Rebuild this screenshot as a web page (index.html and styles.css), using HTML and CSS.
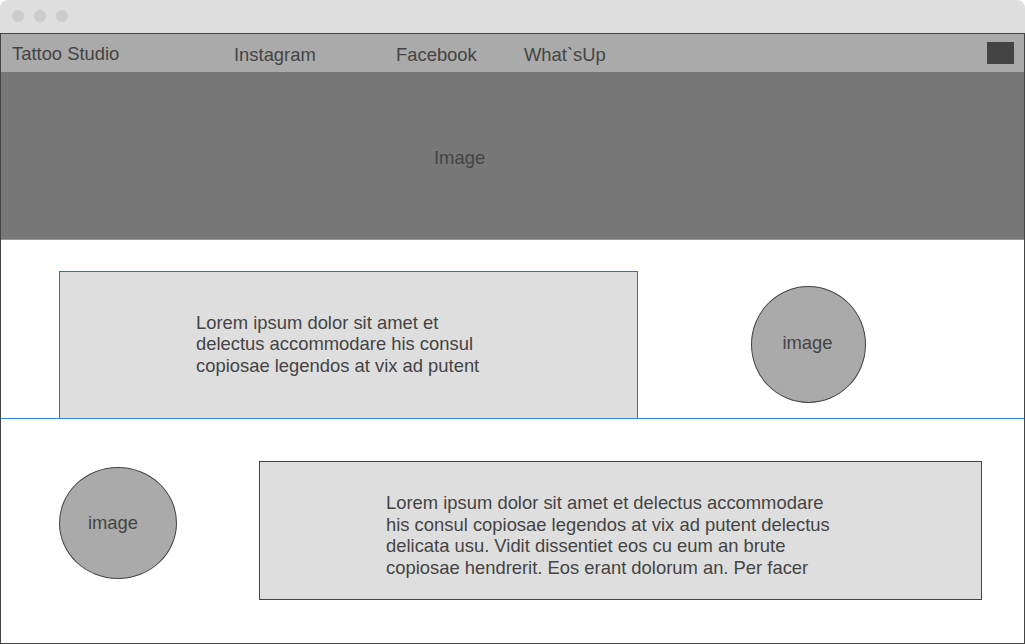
FILE: index.html
```html
<!DOCTYPE html>
<html>
<head>
<meta charset="utf-8">
<title>Tattoo Studio</title>
<link rel="stylesheet" href="styles.css">
</head>
<body>
<div class="window">
  <div class="chrome">
    <span class="dot"></span><span class="dot"></span><span class="dot"></span>
  </div>
  <div class="frame">
    <nav class="nav">
      <span class="brand">Tattoo Studio</span>
      <a class="link link-ig">Instagram</a>
      <a class="link link-fb">Facebook</a>
      <a class="link link-wa">What`sUp</a>
      <span class="menu-btn"></span>
    </nav>
    <div class="hero">Image</div>
    <section class="row row-one">
      <div class="card card-one">
        <p class="card-text">Lorem ipsum dolor sit amet et<br>delectus accommodare his consul<br>copiosae legendos at vix ad putent</p>
      </div>
      <div class="circle circle-one">image</div>
    </section>
    <section class="row row-two">
      <div class="circle circle-two">image</div>
      <div class="card card-two">
        <p class="card-text">Lorem ipsum dolor sit amet et delectus accommodare<br>his consul copiosae legendos at vix ad putent delectus<br>delicata usu. Vidit dissentiet eos cu eum an brute<br>copiosae hendrerit. Eos erant dolorum an. Per facer</p>
      </div>
    </section>
  </div>
</div>
</body>
</html>
```

FILE: styles.css
```css
* { box-sizing: border-box; }
html, body { margin: 0; padding: 0; background: #ffffff; }
body {
  font-family: "Liberation Sans", Arial, sans-serif;
  font-size: 18.4px;
  color: #444444;
}
.window { width: 1025px; height: 644px; }
.chrome {
  height: 33px;
  background: #dedede;
  border-radius: 8px 8px 0 0;
  display: flex;
  align-items: center;
  gap: 10px;
  padding-left: 12px;
  padding-bottom: 1px;
}
.dot {
  width: 12px; height: 12px;
  border-radius: 50%;
  background: #cccccc;
}
.frame {
  height: 611px;
  border: 1px solid #444444;
  display: flex;
  flex-direction: column;
}
.nav {
  height: 38px;
  background: #aaaaaa;
  display: flex;
  align-items: center;
  padding-left: 11px;
  padding-right: 9px;
  flex-shrink: 0;
}
.brand { width: 222px; line-height: 21px; margin-top: 1px; }
.link { line-height: 21px; color: #444444; margin-top: 2px; }
.link-ig { width: 162px; }
.link-fb { width: 128px; }
.menu-btn {
  margin-left: auto;
  margin-right: 1px;
  width: 27px; height: 22px;
  background: #444444;
}
.hero {
  height: 168px;
  background: #777777;
  border-bottom: 1px solid #999999;
  display: flex;
  align-items: center;
  padding-left: 433px;
  padding-top: 5px;
  flex-shrink: 0;
}
.row { display: flex; align-items: flex-start; flex-shrink: 0; }
.row-one { height: 178px; padding-left: 58px; padding-top: 31px; }
.row-two {
  flex: 1;
  border-top: 1px solid #3d80e6;
  padding-left: 58px;
}
.card { background: #dedede; }
.card-text { margin: 0; line-height: 21.6px; white-space: nowrap; }
.card-one {
  width: 579px; height: 147px;
  border: 1px solid #4169c4;
  border-bottom: none;
  display: flex;
  align-items: center;
  padding-left: 136px;
  padding-bottom: 2px;
}
.circle {
  background: #aaaaaa;
  border: 1px solid #444444;
  border-radius: 50%;
  display: flex;
  align-items: center;
  justify-content: center;
}
.circle-one { width: 115px; height: 117px; margin-left: 113px; margin-top: 15px; padding-bottom: 4px; padding-right: 2px; }
.circle-two { width: 118px; height: 112px; margin-top: 48px; padding-right: 10px; }
.card-two {
  width: 723px; height: 139px;
  border: 1px solid #444444;
  margin-left: 82px;
  margin-top: 42px;
  padding-left: 126px;
  padding-top: 30px;
}
```
